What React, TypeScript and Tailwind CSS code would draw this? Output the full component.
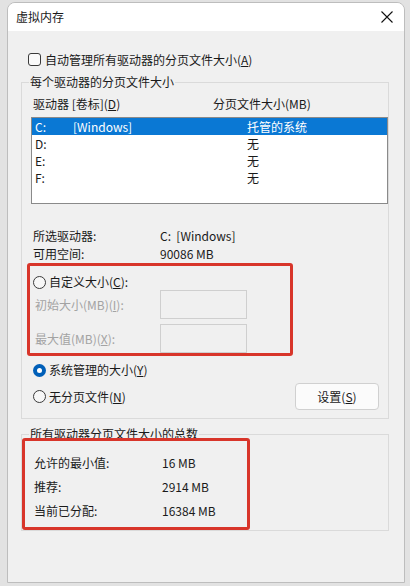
import React from 'react';

const font = { fontFamily: '"Noto Sans CJK SC", "Noto Sans", sans-serif' };

function Radio({ checked }: { checked?: boolean }) {
  if (checked) {
    return (
      <span className="flex h-[13px] w-[13px] shrink-0 items-center justify-center rounded-full bg-[#005fb8]">
        <span className="h-[5px] w-[5px] rounded-full bg-white" />
      </span>
    );
  }
  return <span className="h-[13px] w-[13px] shrink-0 rounded-full border border-[#3a3a3a] bg-[#f7f7f7]" />;
}

function InputBox() {
  return <div className="h-[29px] w-[87px] border border-[#cfcfcf] bg-[#f0f0f0]" />;
}

const drives = [
  { d: 'C:', label: '[Windows]', size: '托管的系统', sel: true },
  { d: 'D:', label: '', size: '无' },
  { d: 'E:', label: '', size: '无' },
  { d: 'F:', label: '', size: '无' },
];

export default function App() {
  return (
    <div className="relative h-[586px] w-[410px] overflow-hidden bg-[#e2e2e2] text-[12px] text-[#1a1a1a]" style={font}>
      <div className="ml-[7px] mt-[2px] h-[581px] w-[398px] overflow-hidden rounded-t-[8px] border border-[#bdbdbd] bg-[#f0f0f0]">
        {/* title bar */}
        <div className="flex h-[28px] items-center justify-between bg-white pl-[8px] pr-[11px]">
          <span className="leading-[16px]">虚拟内存</span>
          <svg width="12" height="12" viewBox="0 0 12 12">
            <path d="M0.5 0.5 L11.5 11.5 M11.5 0.5 L0.5 11.5" stroke="#111" strokeWidth="1.1" />
          </svg>
        </div>

        <div className="pl-[13px]">
          {/* auto manage */}
          <div className="mt-[22px] flex h-[13px] items-center">
            <span className="ml-[7px] h-[13px] w-[13px] rounded-[3px] border border-[#3a3a3a] bg-[#fafafa]" />
            <span className="ml-[4px] leading-[16px]">
              自动管理所有驱动器的分页文件大小(<u>A</u>)
            </span>
          </div>

          {/* per-drive group */}
          <div className="relative mt-[16px] h-[337px] w-[368px] border border-[#dadada]">
            <span className="absolute -top-[9px] left-[7px] bg-[#f0f0f0] px-[1px] leading-[16px]">每个驱动器的分页文件大小</span>

            <div className="mt-[13px] flex h-[16px] pl-[11px] leading-[16px]">
              <span className="w-[180px]">
                驱动器 [卷标](<u>D</u>)
              </span>
              <span>分页文件大小(MB)</span>
            </div>

            <div className="ml-[9px] mt-[5px] h-[87px] w-[357px] border border-[#8a8a8a] bg-white">
              {drives.map((r) => (
                <div
                  key={r.d}
                  className={`flex h-[17px] items-center pl-[3px] leading-[17px] ${r.sel ? 'bg-[#0a78d4] text-white' : ''}`}
                >
                  <span className="w-[38px]">{r.d}</span>
                  <span className="w-[174px]">{r.label}</span>
                  <span>{r.size}</span>
                </div>
              ))}
            </div>

            <div className="mt-[23px] flex h-[18px] items-center pl-[11px]">
              <span className="w-[127px]">所选驱动器:</span>
              <span>C:&nbsp;&nbsp;[Windows]</span>
            </div>
            <div className="flex h-[18px] items-center pl-[11px]">
              <span className="w-[127px]">可用空间:</span>
              <span>90086 MB</span>
            </div>

            {/* custom size, highlighted */}
            <div className="ml-[5px] h-[93px] w-[266px] rounded-[3px] border-[3px] border-[#d8352a]">
              <div className="mt-[8px] flex h-[16px] items-center pl-[3px]">
                <Radio />
                <span className="ml-[3px] leading-[16px]">
                  自定义大小(<u>C</u>):
                </span>
              </div>
              <div className="flex h-[29px] items-center pl-[5px] text-[#a3a3a3]">
                <span className="w-[125px]">
                  初始大小(MB)(<u>I</u>):
                </span>
                <InputBox />
              </div>
              <div className="mt-[5px] flex h-[29px] items-center pl-[5px] text-[#a3a3a3]">
                <span className="w-[125px]">
                  最大值(MB)(<u>X</u>):
                </span>
                <InputBox />
              </div>
            </div>

            <div className="ml-[11px] mt-[6px] flex h-[16px] items-center">
              <Radio checked />
              <span className="ml-[3px] leading-[16px]">
                系统管理的大小(<u>Y</u>)
              </span>
            </div>

            <div className="ml-[11px] mr-[9px] mt-[5px] flex h-[27px] items-center justify-between">
              <div className="flex items-center">
                <Radio />
                <span className="ml-[3px] leading-[16px]">
                  无分页文件(<u>N</u>)
                </span>
              </div>
              <button className="h-[27px] w-[84px] rounded-[4px] border border-[#d0d0d0] bg-[#fbfbfb] leading-[16px]">
                设置(<u>S</u>)
              </button>
            </div>
          </div>

          {/* totals group */}
          <div className="relative mt-[15px] h-[97px] w-[368px] border border-[#dadada]">
            <span className="absolute -top-[9px] left-[7px] bg-[#f0f0f0] px-[1px] leading-[16px]">所有驱动器分页文件大小的总数</span>
            <div className="mt-[16px] pl-[12px]">
              {[
                ['允许的最小值:', '16 MB'],
                ['推荐:', '2914 MB'],
                ['当前已分配:', '16384 MB'],
              ].map(([k, v]) => (
                <div key={k} className="flex h-[24px] items-center">
                  <span className="w-[128px]">{k}</span>
                  <span>{v}</span>
                </div>
              ))}
            </div>
            <div className="absolute left-0 top-[3px] h-[92px] w-[228px] rounded-[3px] border-[3px] border-[#d8352a]" />
          </div>
        </div>
      </div>
    </div>
  );
}
